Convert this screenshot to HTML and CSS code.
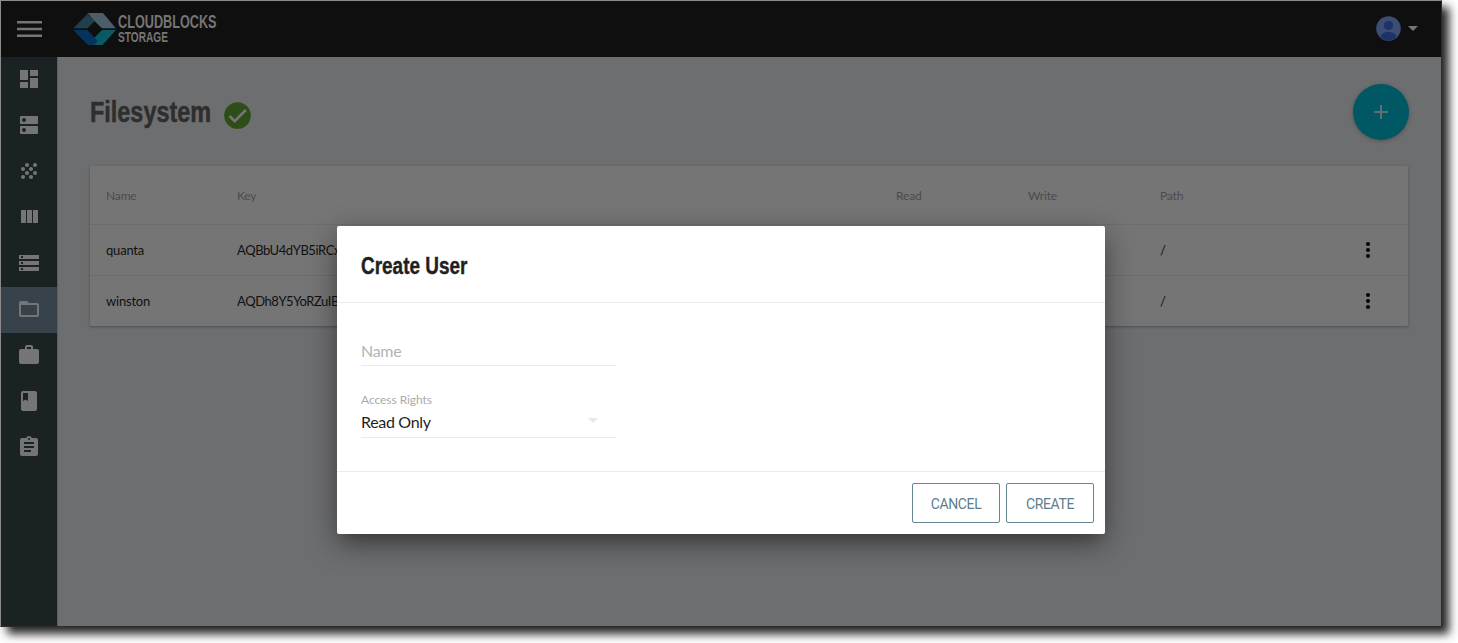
FILE: index.html
```html
<!DOCTYPE html>
<html lang="en">
<head>
<meta charset="utf-8">
<title>Cloudblocks Storage</title>
<link rel="stylesheet" href="styles.css">
</head>
<body>
<div class="window">
  <header class="topbar">
    <svg class="menu" width="25" height="18" viewBox="0 0 25 18"><path d="M0 1h25v2.500H0zM0 7.800h25v2.500H0zM0 14.500h25V17H0z"/></svg>
    <svg class="logo" width="150" height="44" viewBox="0 -4 150 44">
      <path fill="#203e4e" d="M0 16.500 14.500 2 22 9 14.500 16.500z"/>
      <path fill="#4c5e6a" d="M14.500 1H30l13 15.500H29L21.500 9z"/>
      <path fill="#04335b" d="M0 18h14.500l7 7.500L26 30l-5 3h-6z"/>
      <path fill="#075a66" d="M29 18h14L29.500 33H20l-1-5z"/>
      <path fill="#04335b" d="M15 33l6.500-7.500L25 29l-4 4z"/>
      <path fill="#0f0f0f" d="M21.500 9.500 29 17l-7.500 8.500L14 17z"/>
      <path fill="#0f0f0f" d="M0 16.500h43v1H0z"/>
      <text x="45" y="15.700" font-size="17.600" textLength="98.500" lengthAdjust="spacingAndGlyphs">CLOUDBLOCKS</text>
      <text x="45" y="29.600" font-size="14.400" textLength="50" lengthAdjust="spacingAndGlyphs">STORAGE</text>
    </svg>
    <div class="account">
      <svg width="25" height="25" viewBox="0 0 25 25"><circle cx="12.500" cy="12.500" r="12.300" fill="#3e4e73"/><circle cx="12.500" cy="9.500" r="4.600" fill="#1c3268"/><path fill="#1c3268" d="M4.800 21.500C5 17.500 8 16 12.500 16s7.500 1.500 7.700 5.500A12 12 0 0 1 12.500 24.500a12 12 0 0 1-7.700-3z"/></svg>
      <svg width="10" height="5" viewBox="0 0 10 5"><path fill="#757575" d="M0 0h10L5 5z"/></svg>
    </div>
  </header>
  <div class="body">
    <nav class="sidebar">
      <a class="item"><svg viewBox="0 0 24 24"><path d="M3 13h8V3H3v10zm0 8h8v-6H3v6zm10 0h8V11h-8v10zm0-18v6h8V3h-8z"/></svg></a>
      <a class="item"><svg viewBox="0 0 24 24"><path d="M20 13H4c-.55 0-1 .45-1 1v6c0 .55.45 1 1 1h16c.55 0 1-.45 1-1v-6c0-.55-.45-1-1-1zM7 19c-1.100 0-2-.9-2-2s.9-2 2-2 2 .9 2 2-.9 2-2 2zM20 3H4c-.55 0-1 .45-1 1v6c0 .55.45 1 1 1h16c.55 0 1-.45 1-1V4c0-.55-.45-1-1-1zM7 9c-1.100 0-2-.9-2-2s.9-2 2-2 2 .9 2 2-.9 2-2 2z"/></svg></a>
      <a class="item"><svg viewBox="0 0 24 24"><circle cx="10" cy="6" r="2"/><circle cx="18" cy="6" r="2"/><circle cx="6" cy="10" r="2"/><circle cx="14" cy="10" r="2"/><circle cx="10" cy="14" r="2"/><circle cx="18" cy="14" r="2"/><circle cx="6" cy="18" r="2"/><circle cx="14" cy="18" r="2"/></svg></a>
      <a class="item"><svg viewBox="0 0 24 24"><path d="M10 18h5V5h-5v13zm-6 0h5V5H4v13zM16 5v13h5V5h-5z"/></svg></a>
      <a class="item"><svg viewBox="0 0 24 24"><path d="M2 20h20v-4H2v4zm2-3h2v2H4v-2zM2 4v4h20V4H2zm4 3H4V5h2v2zm-4 7h20v-4H2v4zm2-3h2v2H4v-2z"/></svg></a>
      <a class="item active"><svg viewBox="0 0 24 24"><path d="M20 6h-8l-2-2H4c-1.100 0-1.990.9-1.990 2L2 18c0 1.100.9 2 2 2h16c1.100 0 2-.9 2-2V8c0-1.100-.9-2-2-2zm0 12H4V8h16v10z"/></svg></a>
      <a class="item"><svg viewBox="0 0 24 24"><path d="M20 6h-4V4c0-1.110-.89-2-2-2h-4c-1.110 0-2 .89-2 2v2H4c-1.110 0-1.990.89-1.990 2L2 19c0 1.110.89 2 2 2h16c1.110 0 2-.89 2-2V8c0-1.110-.89-2-2-2zm-6 0h-4V4h4v2z"/></svg></a>
      <a class="item"><svg viewBox="0 0 24 24"><path d="M18 2H6c-1.100 0-2 .9-2 2v16c0 1.100.9 2 2 2h12c1.100 0 2-.9 2-2V4c0-1.100-.9-2-2-2zM6 4h5v8l-2.500-1.500L6 12V4z"/></svg></a>
      <a class="item"><svg viewBox="0 0 24 24"><path d="M19 3h-4.180C14.400 1.840 13.300 1 12 1c-1.300 0-2.400.84-2.820 2H5c-1.100 0-2 .9-2 2v14c0 1.100.9 2 2 2h14c1.100 0 2-.9 2-2V5c0-1.100-.9-2-2-2zm-7 0c.55 0 1 .45 1 1s-.45 1-1 1-1-.45-1-1 .45-1 1-1zm2 14H7v-2h7v2zm3-4H7v-2h10v2zm0-4H7V7h10v2z"/></svg></a>
    </nav>
    <main class="content">
      <div class="heading">
        <h1>Filesystem</h1>
        <svg class="ok" width="27" height="27" viewBox="0 0 27 27"><circle cx="13.500" cy="13.500" r="13.300" fill="#2f4e17"/><path d="M5.500 14l5.200 5.200L21.800 8" fill="none" stroke="#757575" stroke-width="2.500"/></svg>
        <button class="add"><svg width="14" height="14" viewBox="0 0 14 14"><path d="M6.200 0h1.600v6.200H14v1.600H7.800V14H6.200V7.800H0V6.200h6.200z"/></svg></button>
      </div>
      <section class="table">
        <div class="row head"><span>Name</span><span>Key</span><span>Read</span><span>Write</span><span>Path</span><span></span></div>
        <div class="row"><span>quanta</span><span class="key">AQBbU4dYB5iRCx</span><span></span><span></span><span>/</span><svg width="6" height="18" viewBox="0 0 6 18"><circle cx="3" cy="3" r="2"/><circle cx="3" cy="9" r="2"/><circle cx="3" cy="15" r="2"/></svg></div>
        <div class="row"><span>winston</span><span class="key">AQDh8Y5YoRZuIBA</span><span></span><span></span><span>/</span><svg width="6" height="18" viewBox="0 0 6 18"><circle cx="3" cy="3" r="2"/><circle cx="3" cy="9" r="2"/><circle cx="3" cy="15" r="2"/></svg></div>
      </section>
    </main>
  </div>
  <div class="dialog">
    <div class="dialog-head"><h2>Create User</h2></div>
    <div class="dialog-body">
      <div class="field"><span class="placeholder">Name</span></div>
      <div class="field select">
        <label>Access Rights</label>
        <div class="value"><span>Read Only</span><svg width="10" height="5" viewBox="0 0 10 5"><path fill="#e4e9ed" d="M0 0h10L5 5z"/></svg></div>
      </div>
    </div>
    <div class="dialog-foot"><button class="cancel"><span>CANCEL</span></button><button class="create"><span>CREATE</span></button></div>
  </div>
</div>
</body>
</html>
```
FILE: styles.css
```css
* { box-sizing: border-box; }
body {
  margin: 0;
  height: 643px;
  overflow: hidden;
  background: #fff;
  font-family: Lato, "Liberation Sans", sans-serif;
}
button { font: inherit; padding: 0; }
.window {
  position: relative;
  width: 1442px;
  height: 627px;
  display: flex;
  flex-direction: column;
  border: 1px solid #8b8b8b;
  border-right-color: #2c2c2c;
  border-bottom-color: #2c2c2c;
  box-shadow: 7px 7px 9px rgba(0, 0, 0, .85);
}
.topbar {
  height: 56px;
  flex: none;
  display: flex;
  align-items: center;
  padding: 0 23px 0 16px;
  background: #0f0f0f;
}
.menu { fill: #757575; }
.logo {
  margin: 2px 0 0 31px;
  overflow: visible;
  font-family: "Liberation Sans", sans-serif;
  font-weight: 700;
  fill: #757575;
}
.account {
  margin-left: auto;
  padding-bottom: 2px;
  display: flex;
  align-items: center;
  gap: 7px;
}
.body { flex: 1; display: flex; }
.sidebar { width: 56px; background: #1b2224; }
.item {
  height: 46px;
  display: flex;
  align-items: center;
  justify-content: center;
  padding-bottom: 2px;
}
.item svg { width: 24px; height: 24px; fill: #757575; }
.item.active { background: #37424a; }
.content {
  flex: 1;
  padding: 27px 33px 0;
  background: #6d6e70;
  border-left: 1px solid #5b5e60;
}
.heading { height: 56px; display: flex; align-items: center; margin-left: -1px; }
h1, h2 {
  margin: 0;
  font-family: "Liberation Sans", sans-serif;
  transform-origin: left center;
}
h1 {
  width: 134px;
  font-size: 29px;
  color: #2e2e2e;
  transform: scaleX(.808);
  -webkit-text-stroke: .5px #2e2e2e;
}
.ok { margin-top: 6px; }
.add {
  width: 56px;
  height: 56px;
  margin-left: auto;
  margin-right: -1px;
  border: 0;
  border-radius: 50%;
  background: #005864;
  box-shadow: 0 1px 4px rgba(0, 0, 0, .25);
}
.add svg { display: block; margin: auto; fill: #757575; }
.table {
  height: 160px;
  margin: 26px 0 0 -1px;
  background: #757575;
  border-radius: 1px;
  box-shadow: 0 1px 3px rgba(50, 60, 70, .6);
}
.row {
  height: 51px;
  padding-left: 16px;
  display: grid;
  grid-template-columns: 131px 659px 132px 132px 205px 6px;
  align-items: center;
  font-size: 13px;
  letter-spacing: -.2px;
  color: #111;
  border-top: 1px solid #6d6d6d;
}
.key { letter-spacing: -.42px; }
.row.head {
  height: 58px;
  padding-top: 1px;
  border: 0;
  font-size: 12px;
  letter-spacing: -.15px;
  color: #4b4b4b;
}
.dialog {
  position: absolute;
  left: 336px;
  top: 225px;
  width: 768px;
  height: 308px;
  display: flex;
  flex-direction: column;
  background: #fff;
  border-radius: 2px;
  box-shadow: 0 11px 15px -7px rgba(0, 0, 0, .2), 0 9px 30px rgba(0, 0, 0, .42);
}
.dialog-head {
  height: 77px;
  padding: 5px 24px 0;
  display: flex;
  align-items: center;
  border-bottom: 1px solid #ebebeb;
}
h2 {
  font-size: 23.500px;
  color: #1f1f1f;
  transform: scaleX(.807);
  white-space: nowrap;
  -webkit-text-stroke: .4px #1f1f1f;
}
.dialog-body { flex: 1; padding: 36px 24px 0; }
.field { width: 255px; height: 27px; border-bottom: 1px solid #e8ebed; }
.placeholder { font-size: 16px; line-height: 24px; letter-spacing: -.3px; color: #b3b3b3; }
.field.select { height: 46px; margin-top: 26px; }
label { display: block; font-size: 12px; line-height: 16px; letter-spacing: -.05px; color: #ababab; }
.value {
  display: flex;
  align-items: center;
  justify-content: space-between;
  padding-right: 18px;
  font-size: 16px;
  line-height: 27px;
  letter-spacing: -.32px;
  color: #1f1f1f;
}
.value svg { margin-top: -3px; }
.dialog-foot {
  height: 63px;
  padding: 11px 11px 0 0;
  display: flex;
  justify-content: flex-end;
  gap: 6px;
  border-top: 1px solid #ebebeb;
}
.dialog-foot button {
  width: 88px;
  height: 40px;
  padding-top: 2px;
  background: #fff;
  border: 1px solid #668593;
  border-radius: 2px;
  font-family: Roboto, sans-serif;
  font-size: 14px;
  letter-spacing: -.35px;
  color: #607d8b;
}
```
